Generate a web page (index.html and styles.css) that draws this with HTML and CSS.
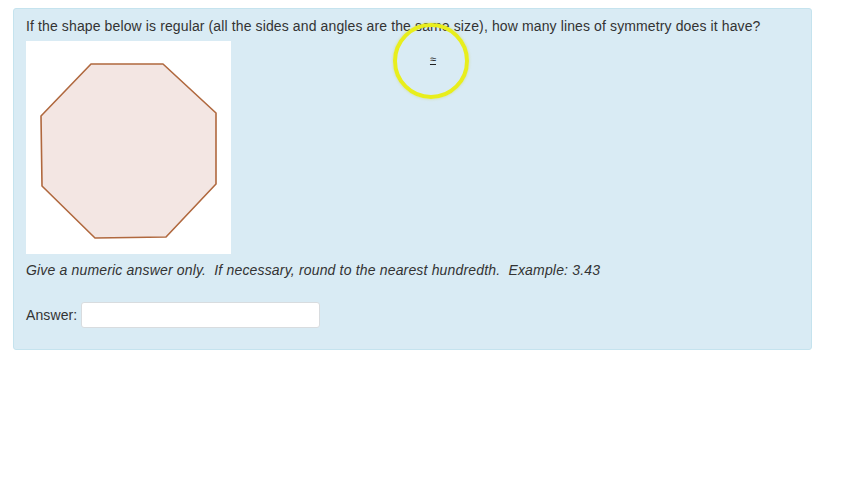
FILE: index.html
```html
<!DOCTYPE html>
<html>
<head>
<meta charset="utf-8">
<link rel="stylesheet" href="styles.css">
</head>
<body>
<div class="panel">
  <p class="question">If the shape below is regular (all the sides and angles are the same size), how many lines of symmetry does it have?</p>
  <div class="figure">
    <svg width="205" height="213" viewBox="0 0 205 213">
      <polygon points="65,23 137,23 190,72 190,143 140,196 69,197 16,145 15,75" fill="#f3e6e3" stroke="#b0683e" stroke-width="1.6" stroke-linejoin="round"/>
    </svg>
  </div>
  <p class="hint">Give a numeric answer only.  If necessary, round to the nearest hundredth.  Example: 3.43</p>
  <div class="answer">
    <label class="answer-label">Answer:</label>
    <input class="answer-input" type="text">
  </div>
  <div class="cursor-ring"><span class="cursor-glyph">≈</span></div>
</div>
</body>
</html>
```
FILE: styles.css
```css
html, body {
  margin: 0;
  padding: 0;
  background: #ffffff;
}
body {
  font-family: "Liberation Sans", Arial, sans-serif;
  font-size: 14px;
  color: #333333;
}
.panel {
  position: relative;
  margin: 8px 0 0 13px;
  width: 799px;
  height: 342px;
  box-sizing: border-box;
  background: #d9ebf4;
  border: 1px solid #c5e3ee;
  border-radius: 3px;
  padding: 7px 12px 0 12px;
  display: flex;
  flex-direction: column;
  align-items: flex-start;
}
.question {
  margin: 0;
  line-height: 20px;
  white-space: nowrap;
  letter-spacing: 0.12px;
}
.figure {
  margin-top: 5px;
  width: 205px;
  height: 213px;
  background: #ffffff;
  display: flex;
}
.hint {
  margin: 6px 0 0 0;
  line-height: 20px;
  font-style: italic;
  white-space: pre;
  letter-spacing: 0.17px;
}
.answer {
  margin-top: 22px;
  display: flex;
  align-items: center;
  gap: 4px;
}
.answer-label {
  line-height: 20px;
  letter-spacing: 0.1px;
}
.answer-input {
  width: 239px;
  height: 26px;
  box-sizing: border-box;
  border: 1px solid #d8dcdf;
  border-radius: 3px;
  background: #ffffff;
  margin: 0;
  padding: 0 6px;
}
.cursor-ring {
  position: absolute;
  left: 379px;
  top: 14px;
  width: 68px;
  height: 68px;
  border: 4px solid #e8ee1c;
  border-radius: 50%;
  box-shadow: 0 0 3px rgba(200, 200, 0, 0.4);
  display: flex;
  align-items: center;
  justify-content: center;
}
.cursor-glyph {
  font-size: 11px;
  line-height: 11px;
  color: #222;
  text-decoration: underline;
  margin-left: 4px;
  margin-top: -4px;
}
```
